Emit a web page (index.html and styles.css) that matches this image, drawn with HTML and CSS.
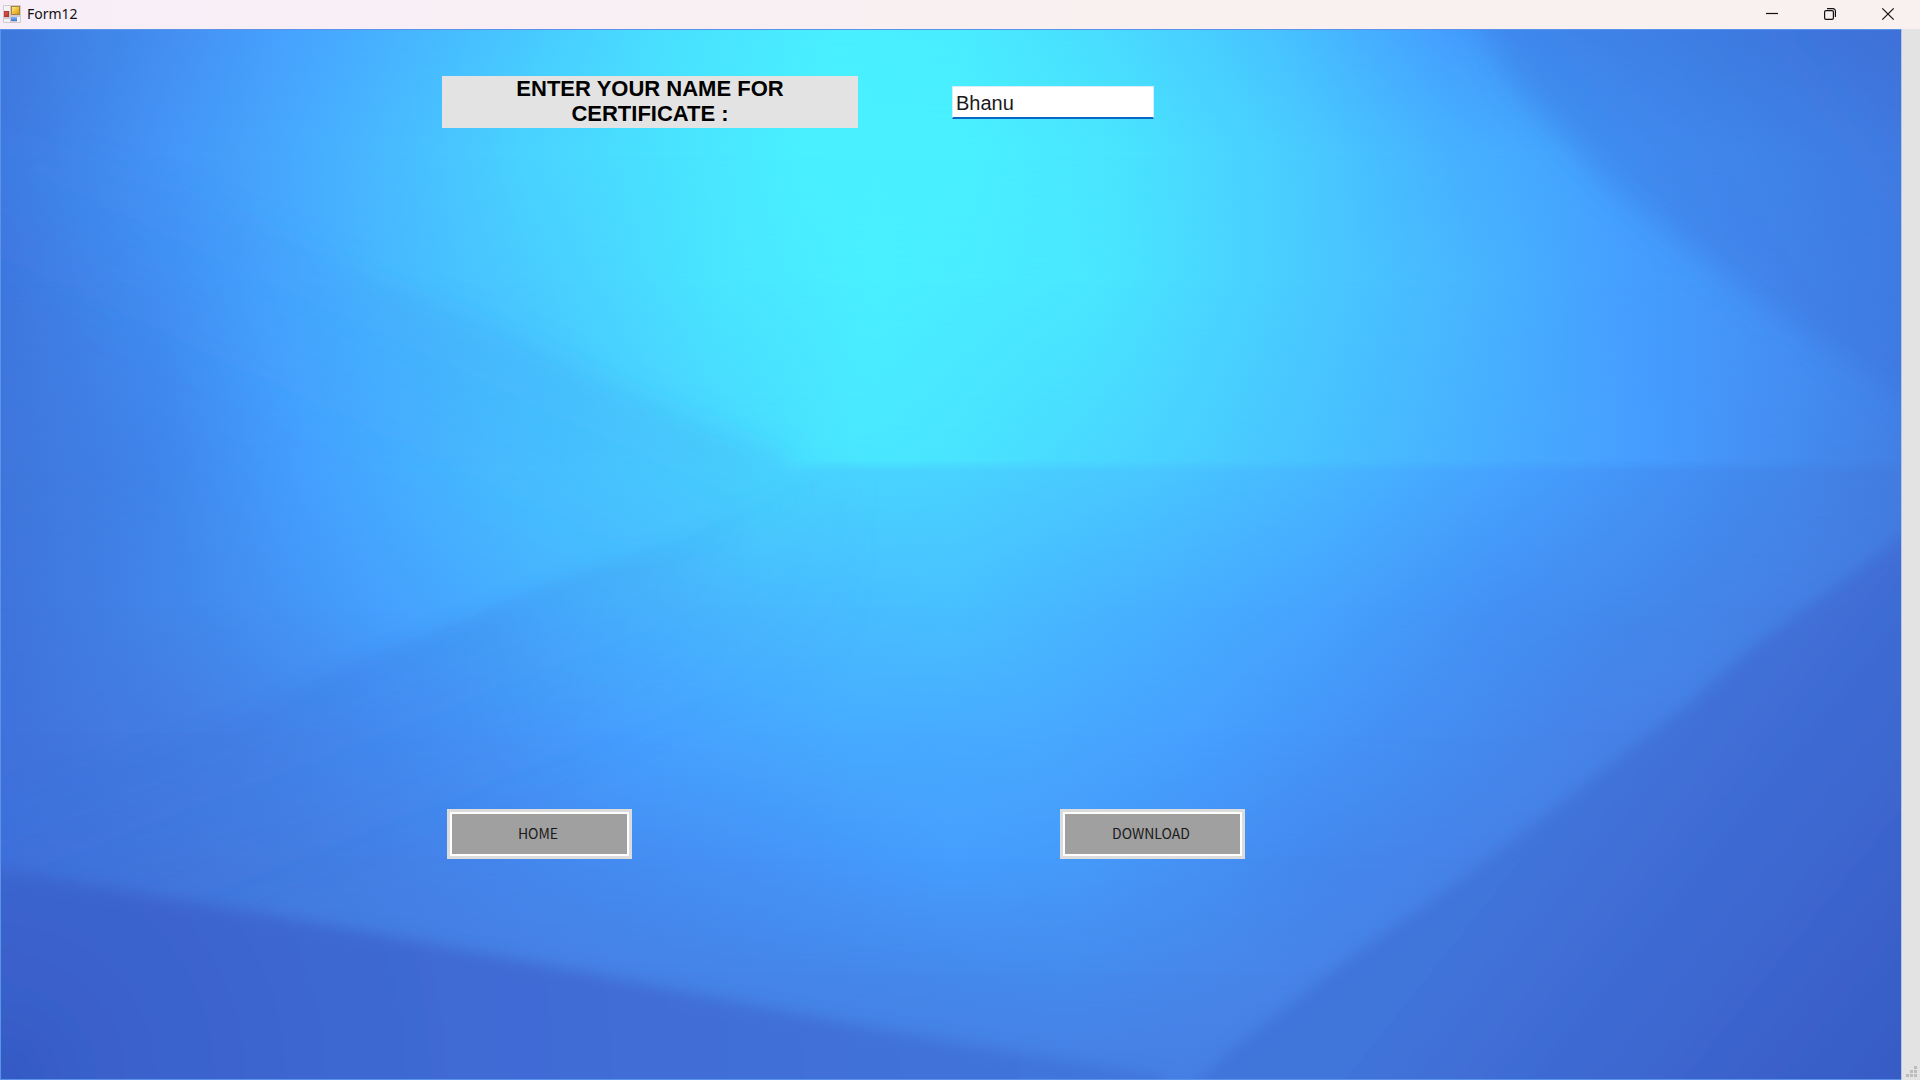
FILE: index.html
```html
<!DOCTYPE html>
<html lang="en">
<head>
<meta charset="utf-8">
<title>Form12</title>
<link rel="stylesheet" href="styles.css">
</head>
<body>
<div class="window">
  <header class="titlebar">
    <svg class="app-icon" viewBox="0 0 18 18" aria-hidden="true">
      <defs>
        <linearGradient id="gold" x2="1" y2="1"><stop stop-color="#fff0a0"/><stop offset=".5" stop-color="#f3c33a"/><stop offset="1" stop-color="#cf9413"/></linearGradient>
        <linearGradient id="red" x2="1" y2="1"><stop stop-color="#e86a55"/><stop offset="1" stop-color="#b02a1c"/></linearGradient>
        <linearGradient id="blue" x2="0" y2="1"><stop stop-color="#85b8f5"/><stop offset="1" stop-color="#3678d6"/></linearGradient>
      </defs>
      <rect width="18" height="18" rx="1" fill="#cfcbd0"/>
      <path d="M1 1h6v5H1zM1 14h6v3H1zM14 12h3v5h-3z" fill="#f4f2f5"/>
      <rect x="8.5" y="1.5" width="8" height="8" fill="url(#gold)" stroke="#a8843a"/>
      <rect x="1.5" y="6.5" width="4" height="5" fill="url(#red)" stroke="#b23a2c"/>
      <rect x="8" y="12" width="6" height="4" fill="url(#blue)"/>
    </svg>
    <h1 class="title">Form12</h1>
    <div class="controls">
      <button class="control" type="button" aria-label="Minimize"><svg viewBox="0 0 12 12"><path d="M0 5.5h12"/></svg></button>
      <button class="control" type="button" aria-label="Restore"><svg viewBox="0 0 12 12"><rect x=".6" y="2.6" width="8.8" height="8.8" rx="1.4"/><path d="M3 .6h6a2.4 2.4 0 0 1 2.4 2.4v6"/></svg></button>
      <button class="control" type="button" aria-label="Close"><svg viewBox="0 0 12 12"><path d="M.3.3l11.4 11.4M11.7.3L.3 11.7"/></svg></button>
    </div>
  </header>
  <div class="body">
    <main class="form">
      <div class="backdrop" aria-hidden="true">
        <div class="layer layer-1"></div>
        <div class="layer layer-2"></div>
        <div class="layer layer-3"></div>
        <div class="layer layer-4"></div>
        <div class="layer layer-5"></div>
        <div class="layer layer-6"></div>
        <div class="layer layer-7"></div>
        <div class="layer layer-8"></div>
        <div class="layer layer-9"></div>
        <div class="layer layer-10"></div>
        <svg class="layer facets" viewBox="0 0 1552 858" preserveAspectRatio="none">
          <defs>
            <linearGradient id="corner" gradientUnits="userSpaceOnUse" x1="1310" y1="130" x2="1500" y2="0"><stop stop-color="#3872dc" stop-opacity=".42"/><stop offset="1" stop-color="#3c6cd6" stop-opacity=".5"/></linearGradient>
            <linearGradient id="wedge" gradientUnits="userSpaceOnUse" x1="330" y1="215" x2="270" y2="345"><stop stop-color="#3a90f0" stop-opacity=".2"/><stop offset="1" stop-color="#3a90f0" stop-opacity="0"/></linearGradient>
            <linearGradient id="fold" gradientUnits="userSpaceOnUse" x1="330" y1="498" x2="390" y2="650"><stop stop-color="#3a74e0" stop-opacity=".24"/><stop offset="1" stop-color="#3a74e0" stop-opacity="0"/></linearGradient>
            <radialGradient id="floor" gradientUnits="userSpaceOnUse" cx="0" cy="858" r="950"><stop stop-color="#3459c4"/><stop offset=".09" stop-color="#3a61cb"/><stop offset=".4" stop-color="#3f6ad4"/><stop offset="1" stop-color="#4076dc"/></radialGradient>
            <linearGradient id="slope" gradientUnits="userSpaceOnUse" x1="1270" y1="632" x2="1552" y2="858"><stop stop-color="#4074da"/><stop offset=".4" stop-color="#3e6ad2"/><stop offset="1" stop-color="#375bc4"/></linearGradient>
            <linearGradient id="fade"><stop stop-color="#fff"/><stop offset=".55" stop-color="#fff"/><stop offset="1" stop-color="#000"/></linearGradient>
            <mask id="taper" maskUnits="userSpaceOnUse" x="-40" y="0" width="760" height="858"><rect x="-40" width="760" height="858" fill="url(#fade)"/></mask>
            <filter id="soft" x="-10%" y="-10%" width="120%" height="120%"><feGaussianBlur stdDeviation="6"/></filter>
            <filter id="softer" x="-10%" y="-10%" width="120%" height="120%"><feGaussianBlur stdDeviation="12"/></filter>
          </defs>
          <g filter="url(#softer)">
            <path d="M1190-30L1240 50 1310 125 1380 180 1440 225 1580 320V-30z" fill="url(#corner)"/>
            <path d="M-20 80L150 137 230 170 330 215 420 250 500 290 645 350V368L560 415 440 450-20 450z" fill="url(#wedge)"/>
          </g>
          <g mask="url(#taper)">
            <path d="M720 330L645 368 560 415 440 455 355 492 275 522 190 565 80 600-20 630V760H900V330z" fill="url(#fold)" filter="url(#soft)"/>
          </g>
          <g filter="url(#soft)">
            <path d="M-20 685L40 694 150 712 300 738 440 764 600 795 740 822 950 856V890H-20z" fill="url(#floor)"/>
            <path d="M1590 385L1500 454 1430 505 1370 558 1300 612 1200 690 1100 760 1000 838 950 890H1590z" fill="url(#slope)"/>
          </g>
        </svg>
      </div>
      <div class="fields">
        <label class="prompt" for="name">ENTER YOUR NAME FOR CERTIFICATE :</label>
        <input class="name" id="name" type="text" value="Bhanu">
      </div>
      <div class="actions">
        <button class="action" type="button">HOME</button>
        <button class="action action-download" type="button">DOWNLOAD</button>
      </div>
    </main>
    <div class="gutter">
      <svg class="grip" viewBox="0 0 12 12" aria-hidden="true"><path d="M8 0h3v3H8zM4 4h3v3H4zM8 4h3v3H8zM0 8h3v3H0zM4 8h3v3H4zM8 8h3v3H8z"/></svg>
    </div>
  </div>
</div>
</body>
</html>
```
FILE: styles.css
```css
* { box-sizing: border-box; }

body { margin: 0; }

.window {
  display: flex;
  flex-direction: column;
  min-height: 100vh;
}

.titlebar {
  display: flex;
  align-items: center;
  height: 29px;
  padding: 0 3px 1px;
  background: linear-gradient(90deg, #f8eef8, #f9f0f0 60%);
}

.app-icon { width: 18px; height: 18px; }

.title {
  margin: 0 0 0 6px;
  font: 400 14px/20px "Noto Sans", sans-serif;
  color: #111;
}

.controls { display: flex; margin-left: auto; }

.control {
  display: grid;
  place-items: center;
  width: 58px;
  height: 28px;
  padding: 0;
  border: 0;
  background: none;
}

.control svg {
  width: 12px;
  height: 12px;
  overflow: visible;
  fill: none;
  stroke: #111;
  stroke-width: 1.2;
}

.body { display: flex; flex: 1; }

.form {
  position: relative;
  display: grid;
  flex: 1;
  grid-template-rows: 52px minmax(40px, 681fr) 50px minmax(40px, 221fr);
  padding-top: 47px;
}

.gutter {
  display: flex;
  align-items: flex-end;
  justify-content: flex-end;
  width: 19px;
  padding: 2px;
  background: #e3e3e3;
  border-left: 1px solid #b4c4e8;
}

.grip { width: 12px; height: 12px; fill: #bcbcbc; }

/* Colour bands, each fading in over the one above it */
.backdrop {
  position: absolute;
  inset: 0;
  display: grid;
  overflow: hidden;
  border: solid #5b93ea;
  border-width: 1px 0 1px 1px;
}

.layer { grid-area: 1 / 1; width: 100%; height: 100%; min-height: 0; }

/* Masked layers stack above plain content, so the facets need a z-index */
.facets { z-index: 1; }

.layer-1 { background: linear-gradient(90deg, #3d78dc, #448ff2 9%, #47a2ff 15%, #47c4ff 26%, #49e0ff 35%, #49f0ff 44%, #49eeff 50%, #49daff 59%, #47c4ff 67%, #459fff 76%, #4090f2 85%, #3f76dc); }
.layer-2 {
  background: linear-gradient(90deg, #3f78e0, #4496f8 9%, #48b2ff 18%, #49d4ff 28%, #49f0ff 42%, #49f0ff 51%, #49e6ff 58%, #49ccff 68%, #46b0ff 77%, #45a0ff 85%, #4288ec);
  mask-image: linear-gradient(transparent, #000 12%);
}
.layer-3 {
  background: linear-gradient(90deg, #3e76de, #4290f4 9%, #46a4ff 14%, #47b8ff 20%, #49ceff 29%, #49e6ff 38%, #49f0ff 46%, #49e8ff 57%, #49ccff 68%, #48b6ff 77%, #45a0ff 85%, #4592f6 93%, #4186ec);
  mask-image: linear-gradient(transparent 12%, #000 24%);
}
.layer-4 {
  background: linear-gradient(90deg, #3f76dc, #3f84ea 8%, #44a0ff 16%, #47bcff 26%, #49ccff 33%, #49deff 41%, #49e8ff 45%, #49e4ff 50%, #49d4ff 60%, #48c0ff 70%, #47acff 79%, #469cff 87%, #427fe4);
  mask-image: linear-gradient(transparent 24%, #000 40%);
}
.layer-5 {
  background: linear-gradient(90deg, #3f76dc, #3f84ea 8%, #44a0ff 16%, #47bcff 26%, #49ccff 33%, #49dcff 40%, #49d6ff 43%, #49d2ff 50%, #49c8ff 60%, #47b6ff 70%, #46a2ff 79%, #4390f4 88%, #437ce0);
  mask-image: linear-gradient(transparent 41%, #000 42%);
}
.layer-6 {
  background: linear-gradient(90deg, #3f74dc, #4288ec 10%, #45a0fe 20%, #47b2ff 29%, #49baff 38%, #48c0ff 50%, #47b4ff 58%, #46a4ff 69%, #4390f4 79%, #4484e8 90%, #447ae0);
  mask-image: linear-gradient(transparent 42%, #000 55%);
}
.layer-7 {
  background: linear-gradient(90deg, #4072dc, #447ee4 10%, #4590f4 22%, #46a0ff 33%, #47acff 45%, #48aaff 54%, #46a0ff 63%, #4490f4 73%, #4682e8 84%, #447ae0);
  mask-image: linear-gradient(transparent 55%, #000 67%);
}
.layer-8 {
  background: linear-gradient(90deg, #3f6ed8, #437adf 12%, #4486ec 26%, #4592f6 39%, #459efe 50%, #459afa 57%, #4488ee 69%, #4680e6 80%, #447ae0);
  mask-image: linear-gradient(transparent 67%, #000 79%);
}
.layer-9 {
  background: linear-gradient(90deg, #406cd8, #437adf 17%, #4680e5 29%, #4586ea 42%, #458bee 56%, #4786ea 65%, #4680e6 74%, #447ae0);
  mask-image: linear-gradient(transparent 79%, #000 90%);
}
.layer-10 {
  background: linear-gradient(90deg, #406cd8, #437ae0 30%, #467fe4 58%, #477ee4 66%, #447ae0);
  mask-image: linear-gradient(transparent 90%, #000);
}

.fields,
.actions { position: relative; z-index: 2; display: grid; align-items: center; }

.fields {
  grid-row: 1;
  grid-template-columns: minmax(0, 442fr) 416px minmax(20px, 94fr) 202px minmax(0, 747fr);
}

.prompt {
  grid-column: 2;
  height: 52px;
  padding: 0 60px;
  background: #e3e3e3;
  color: #000;
  font: 700 22px/25px "Liberation Sans", Arial, sans-serif;
  text-align: center;
}

.name {
  grid-column: 4;
  width: 100%;
  height: 33px;
  padding: 3px 3px 0;
  border: 1px solid #d8eef2;
  border-bottom: 2px solid #0a67c4;
  background: #fff;
  color: #1a1a1a;
  font: 400 20px/24px "Liberation Sans", Arial, sans-serif;
  outline: none;
}

.actions {
  grid-row: 3;
  grid-template-columns: minmax(0, 447fr) 185px minmax(20px, 428fr) 185px minmax(0, 656fr);
}

.action {
  grid-column: 2;
  height: 50px;
  padding: 0 3px 2px 0;
  border: 3px solid #dcdcdc;
  background: #a0a0a0;
  box-shadow: inset 0 0 0 2px #fff;
  color: #1a1a1a;
  font: 400 14px/20px "Noto Sans CJK SC", sans-serif;
}

.action-download { grid-column: 4; }
```
